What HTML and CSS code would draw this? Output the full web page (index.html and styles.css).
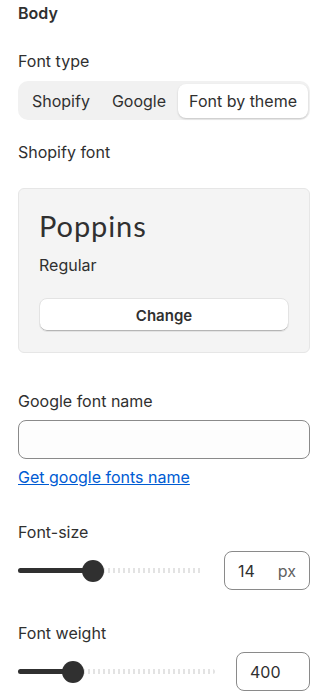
FILE: index.html
```html
<!DOCTYPE html>
<html lang="en">
<head>
  <meta charset="UTF-8" />
  <meta name="viewport" content="width=device-width, initial-scale=1.0" />
  <title>Body font settings</title>
  <link rel="stylesheet" href="styles.css">
</head>
<body>
  <main class="panel">
    <h3 class="heading">Body</h3>

    <div class="label label-first">Font type</div>
    <div class="segmented">
      <button class="seg">Shopify</button>
      <button class="seg">Google</button>
      <button class="seg active">Font by theme</button>
    </div>

    <div class="label label-card">Shopify font</div>
    <div class="font-card">
      <div class="font-name">Poppins</div>
      <div class="font-style">Regular</div>
      <button class="btn-change">Change</button>
    </div>

    <div class="label label-google">Google font name</div>
    <input type="text" class="text-input" />
    <a class="link" href="#">Get google fonts name</a>

    <div class="label label-size">Font-size</div>
    <div class="range-row">
      <div class="range">
        <div class="range-fill" style="width: 40.5%"></div>
        <div class="range-thumb" style="left: 40.5%"></div>
      </div>
      <div class="num-box num-size">
        <span>14</span>
        <span class="unit">px</span>
      </div>
    </div>

    <div class="label label-weight">Font weight</div>
    <div class="range-row">
      <div class="range">
        <div class="range-fill" style="width: 28%"></div>
        <div class="range-thumb" style="left: 28%"></div>
      </div>
      <div class="num-box num-weight">
        <span>400</span>
      </div>
    </div>
  </main>
</body>
</html>
```

FILE: styles.css
```css
body { margin: 0; padding: 0; background: #fff; color: #303030; font-family: Inter, "Liberation Sans", sans-serif; font-size: 16px; }
.panel { padding: 3px 18px 0; display: flex; flex-direction: column; }
.heading { margin: 0; font-size: 16px; font-weight: 600; line-height: 20px; }
.label { line-height: 20px; }
.label-first { margin-top: 28px; }
.label-card { margin-top: 22px; }
.label-google { margin-top: 38px; }
.label-size { margin-top: 35px; }
.label-weight { margin-top: 33px; }

.segmented { margin-top: 10px; display: flex; background: #f1f1f1; border-radius: 10px; padding: 3px 2px 2px 3px; height: 39px; box-sizing: border-box; }
.seg { font: inherit; color: #303030; background: none; border: none; padding: 0 11px; border-radius: 8px; cursor: pointer; }
.seg.active { margin-left: auto; background: #fff; box-shadow: 0 1px 2px rgba(0,0,0,0.18); }

.font-card { margin-top: 26px; background: #f4f4f4; border: 1px solid #e6e6e6; border-radius: 6px; padding: 20px 20px 20px 20px; display: flex; flex-direction: column; }
.font-name { font-family: Lato, sans-serif; font-size: 29px; letter-spacing: 0.9px; line-height: 34px; color: #303030; }
.font-style { margin-top: 12px; line-height: 20px; }
.btn-change { margin-top: 23px; height: 34px; font: inherit; font-size: 15px; font-weight: 600; color: #303030; background: #fff; border: 1px solid #e3e3e3; border-radius: 8px; box-shadow: inset 0 -1px 0 #b5b5b5; cursor: pointer; }

.text-input { margin-top: 9px; height: 39px; box-sizing: border-box; border: 1px solid #8a8a8a; border-radius: 8px; background: #fdfdfd; font: inherit; padding: 0 12px; }
.link { margin-top: 8px; line-height: 20px; color: #005bd3; text-decoration: underline; align-self: flex-start; }

.range-row { margin-top: 9px; display: flex; align-items: center; gap: 21px; }
.range { flex: 1; height: 5px; position: relative; background: repeating-linear-gradient(90deg, #e3e3e3 0 2px, transparent 2px 5px); border-radius: 3px; }
.range-fill { height: 5px; background: #303030; border-radius: 3px; }
.range-thumb { position: absolute; top: 50%; width: 22px; height: 22px; margin: -11px 0 0 -11px; border-radius: 50%; background: #303030; }

.num-box { height: 39px; box-sizing: border-box; border: 1px solid #8a8a8a; border-radius: 8px; display: flex; align-items: center; }
.num-size { width: 86px; padding: 0 13px; justify-content: space-between; }
.num-weight { width: 74px; padding: 0 13px; }
.unit { color: #616161; }
```
